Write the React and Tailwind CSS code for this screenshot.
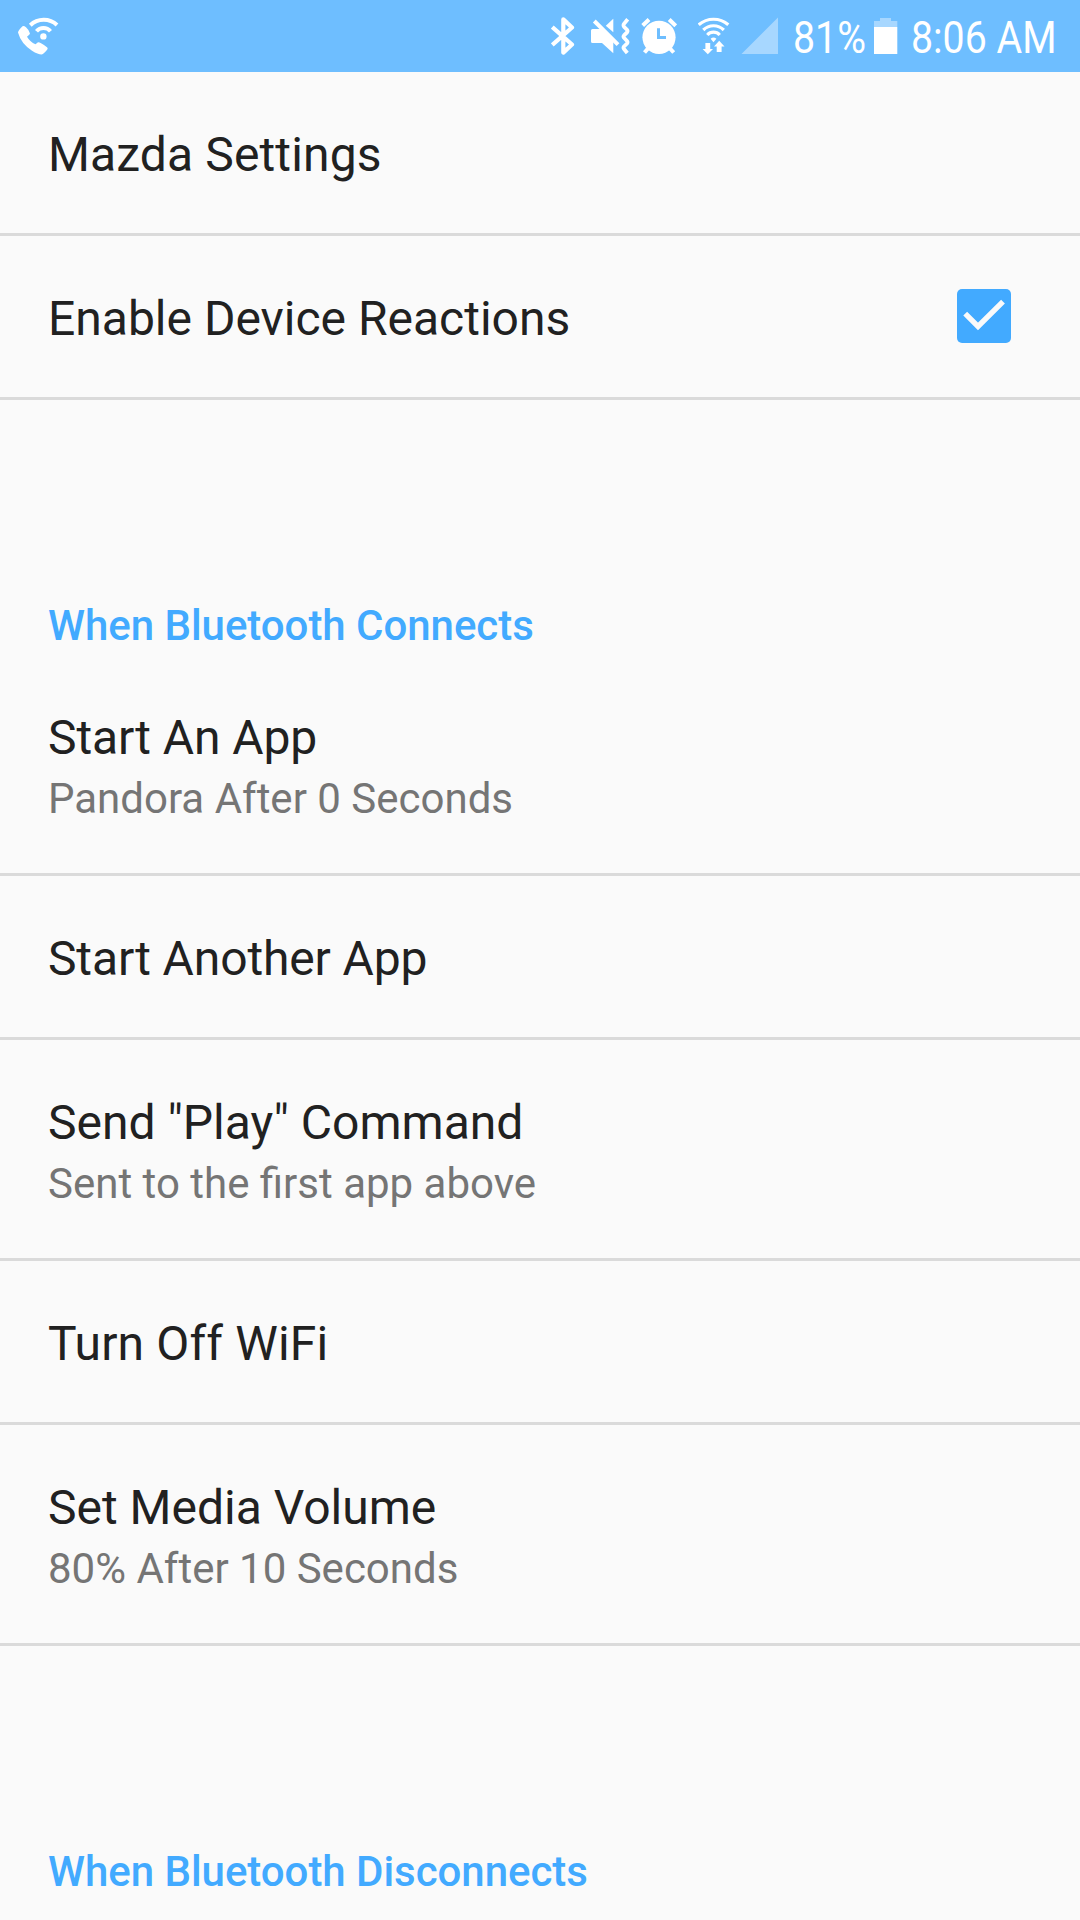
const Row = ({ title, sub, titleClass = '', children }) => (
  <div
    className={`flex items-center justify-between border-b-[3px] border-[#dadada] pt-1 pr-[69px] pl-12 ${sub ? 'h-[221px]' : 'h-[164px]'}`}
  >
    <div>
      <div className={`text-[48px] leading-[64px] text-[#212121] ${titleClass}`}>{title}</div>
      {sub && <div className="text-[42px] leading-[57px] text-[#757575]">{sub}</div>}
    </div>
    {children}
  </div>
);

const SectionHeader = ({ children }) => (
  <div className="h-[255px] px-12 pt-[201px] text-[42px] leading-[50px] font-medium tracking-[-0.04px] text-[#42aaff]">
    {children}
  </div>
);

const Checkbox = () => (
  <div className="-mt-1.5 size-[54px] rounded-[5px] bg-[#42aaff]">
    <svg className="block" width="54" height="54" viewBox="0 0 54 54" fill="none" stroke="#fafafa" strokeWidth="5.4">
      <path d="M8.2 24.7 21 37.5 46 12.6" />
    </svg>
  </div>
);

const WifiCallIcon = () => (
  <svg width="42" height="72" viewBox="18 0 42 72" fill="none" stroke="#fff" strokeWidth="4">
    <path d="M30.3 25.2A19.5 19.5 0 0 1 57 25" />
    <path d="M36.5 31.2A9.3 9.3 0 0 1 50.5 31.2" />
    <circle cx="43.4" cy="36.4" r="3.2" fill="#fff" stroke="none" />
    <path
      fill="#fff"
      stroke="none"
      d="M18 32.5Q18 30.5 22.5 26.2 24 25.5 26 27.3 29 30 30 33.5 30 34.5 27 36.8 30 42 35.5 44.3L38 42.3Q40 42 47 47.3 48.5 48.5 46.5 50.5 43 54.5 41.5 54.6 38 54.5 32 50.8 21 43.5 18 32.5Z"
    />
  </svg>
);

const BluetoothIcon = () => (
  <svg width="24" height="72" viewBox="551 0 24 72" fill="none" stroke="#fff" strokeWidth="4.2" strokeLinejoin="round">
    <path d="M552.3 27 572 44.5 563.3 52.6V19.4L572 27.5 552.3 45" />
  </svg>
);

const MuteVibrateIcon = () => (
  <svg width="39" height="72" viewBox="591 0 39 72" fill="#fff">
    <path d="M592.5 29H603L613.3 40V53.3L602 43H592.5Q591 43 591 41.5V30.5Q591 29 592.5 29Z" />
    <path d="M613.3 18.7V32.3L605.8 25.8Z" />
    <path d="M594.3 21 618 44.7" stroke="#fff" strokeWidth="4" />
    <path
      d="M627.7 19.3 624 23.8Q623 25.3 624 26.7L627 29.8Q628 31 627 32.4L624 35.4Q623 36.6 624 37.8L627 41Q628 42.2 627 43.5L624 46.5Q623 47.8 624 49L627.3 53"
      fill="none"
      stroke="#fff"
      strokeWidth="3.8"
    />
  </svg>
);

const AlarmIcon = () => (
  <svg width="36" height="72" viewBox="641 0 36 72" fill="none" stroke="#fff" strokeWidth="4">
    <circle cx="659" cy="37.3" r="16.6" fill="#fff" stroke="none" />
    <path d="M642.7 25.5 649 19.5M669.2 19.5 675.7 25.8M648 48.5 644.5 52.5M670 48.5 673.7 52.5" />
    <path d="M658.5 28.3V37.4H666" stroke="#6ebeff" strokeWidth="3" />
  </svg>
);

const WifiIcon = () => (
  <svg width="32" height="72" viewBox="698 0 32 72" fill="#fff">
    <g fill="none" stroke="#fff" strokeWidth="3.2">
      <path d="M698.7 24.8A22.5 22.5 0 0 1 728.3 24.8" />
      <path d="M703.3 30A14.5 14.5 0 0 1 723.8 30" />
      <path d="M707.3 35A8.3 8.3 0 0 1 719.7 35" />
    </g>
    <path d="M710.6 38.8Q713.5 36 716.4 38.8L713.5 42.3Z" />
    <path d="M705.4 43H710.2V49H713L707.8 54.3 702.6 49H705.4Z" />
    <path d="M716.7 52H721.6V46.4H724.5L719.2 40.8 714 46.4H716.7Z" />
  </svg>
);

const SignalIcon = () => (
  <svg width="37" height="72" viewBox="741 0 37 72">
    <path d="M741.5 54H778V17.5Z" fill="#a7d7ff" />
  </svg>
);

const BatteryIcon = () => (
  <svg width="24" height="72" viewBox="874 0 24 72">
    <path d="M874 27V21H880V18H891V21H897.3V27Z" fill="#a7d7ff" />
    <path d="M874 27H897.3V54H874Z" fill="#fff" />
  </svg>
);

const StatusText = ({ className, children }) => (
  <div className={`shrink-0 pt-[2px] ${className}`}>
    <span className="inline-block origin-left scale-x-[0.883] text-[44.5px] leading-[72px] whitespace-nowrap">
      {children}
    </span>
  </div>
);

export default function App() {
  return (
    <div className="h-[1920px] w-[1080px] overflow-hidden bg-[#fafafa] font-['Roboto',sans-serif]">
      <div className="flex h-[72px] items-start bg-[#6ebeff] pl-[18px] text-white">
        <WifiCallIcon />
        <div className="ml-auto flex h-[72px] w-[529px] shrink-0 items-start">
          <BluetoothIcon />
          <div className="w-4" />
          <MuteVibrateIcon />
          <div className="w-[11px]" />
          <AlarmIcon />
          <div className="w-[21px]" />
          <WifiIcon />
          <div className="w-[11px]" />
          <SignalIcon />
          <StatusText className="ml-[15px] w-[81px]">81%</StatusText>
          <BatteryIcon />
          <StatusText className="ml-[12.5px] w-[150px]">8:06 AM</StatusText>
        </div>
      </div>
      <Row title="Mazda Settings" titleClass="tracking-[0.13px]" />
      <Row title="Enable Device Reactions">
        <Checkbox />
      </Row>
      <SectionHeader>When Bluetooth Connects</SectionHeader>
      <Row title="Start An App" titleClass="tracking-[-0.1px]" sub="Pandora After 0 Seconds" />
      <Row title="Start Another App" titleClass="tracking-[-0.13px]" />
      <Row title={'Send "Play" Command'} sub="Sent to the first app above" />
      <Row title="Turn Off WiFi" titleClass="tracking-[0.15px]" />
      <Row title="Set Media Volume" sub="80% After 10 Seconds" />
      <SectionHeader>When Bluetooth Disconnects</SectionHeader>
    </div>
  );
}
